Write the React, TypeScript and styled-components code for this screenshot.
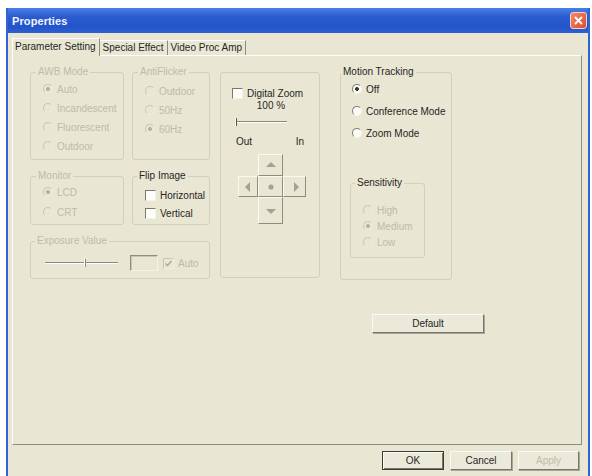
import styled, { createGlobalStyle } from "styled-components";

const FACE = "#e9e7d3";
const INK = "#26261f";
const DIM = "#bdbca8";
const EDGE = "#d2d0bc";
const SHADE = "#8d8c7e";

const GlobalStyle = createGlobalStyle`
  html, body { margin: 0; padding: 0; background: #fff; }
  body { font-family: "Liberation Sans", Arial, sans-serif; font-size: 10px; color: ${INK}; }
`;

const Window = styled.div`
  margin: 8px 0 0 6px;
  width: 584px;
  height: 468px;
  box-sizing: border-box;
  padding: 0 2px;
  background: #3262d4;
  display: flex;
  flex-direction: column;
`;

const TitleBar = styled.div`
  height: 25px;
  flex: none;
  display: flex;
  align-items: center;
  justify-content: space-between;
  padding: 0 1px 0 4px;
  background: linear-gradient(#4a7fe8, #2a5ccf 35%, #2354c9 75%, #2d60d3);
`;

const Title = styled.span`
  font: bold 11px "Liberation Sans", Arial, sans-serif;
  color: #f2f5ff;
  letter-spacing: 0.1px;
`;

const CloseButton = styled.div`
  width: 17px;
  height: 17px;
  box-sizing: border-box;
  border: 1px solid #f3d2c4;
  border-radius: 3px;
  background: linear-gradient(135deg, #f08a6a, #d9502e);
  display: flex;
  align-items: center;
  justify-content: center;
`;

const Client = styled.div`
  flex: 1;
  background: ${FACE};
  display: flex;
  flex-direction: column;
  padding: 5px 3px 0 4px;
`;

const TabStrip = styled.div`
  height: 17px;
  display: flex;
  align-items: flex-end;
  position: relative;
  z-index: 1;
`;

const Tab = styled.div<{ $active?: boolean }>`
  height: ${(p) => (p.$active ? 18 : 15)}px;
  margin-bottom: ${(p) => (p.$active ? -1 : 0)}px;
  box-sizing: border-box;
  padding: ${(p) => (p.$active ? "2px 3px 0 2px" : "1px 3px 0 3px")};
  border-top: 1px solid #fff;
  border-left: ${(p) => (p.$active ? "1px solid #fff" : "none")};
  border-right: 1px solid ${SHADE};
  background: ${FACE};
  font-size: 10px;
  white-space: nowrap;
  color: ${INK};
`;

const Panel = styled.div`
  height: 390px;
  margin-right: 3px;
  box-sizing: border-box;
  border: 1px solid;
  border-color: #fff ${SHADE} ${SHADE} #fff;
  padding: 16px 0 0 17px;
  display: flex;
  flex-direction: column;
`;

const TopArea = styled.div`
  display: flex;
  align-items: flex-start;
`;

const LeftGrid = styled.div`
  display: grid;
  grid-template-columns: 94px 78px;
  grid-template-rows: 88px 49px 38px;
  column-gap: 8px;
  row-gap: 16px;
`;

/* group box: the caption sits on the top border line */
const Group = styled.div<{ $wide?: boolean }>`
  box-sizing: border-box;
  border: 1px solid ${EDGE};
  border-radius: 3px;
  display: flex;
  flex-direction: column;
  align-items: flex-start;
  ${(p) => (p.$wide ? "grid-column: 1 / -1;" : "")}
`;

const Caption = styled.span<{ $dim?: boolean; $left?: number }>`
  margin: -7px 0 0 ${(p) => p.$left ?? 4}px;
  padding: 0 2px;
  background: ${FACE};
  font-size: 10px;
  line-height: 12px;
  color: ${(p) => (p.$dim ? DIM : INK)};
`;

const Stack = styled.div<{ $gap?: number; $top?: number; $left?: number }>`
  margin: ${(p) => p.$top ?? 4}px 0 0 ${(p) => p.$left ?? 12}px;
  display: flex;
  flex-direction: column;
  gap: ${(p) => p.$gap ?? 5}px;
`;

const Option = styled.label<{ $dim?: boolean }>`
  height: 14px;
  display: flex;
  align-items: center;
  gap: 4px;
  font-size: 10px;
  white-space: nowrap;
  color: ${(p) => (p.$dim ? DIM : INK)};
`;

const RadioMark = styled.span<{ $on?: boolean; $dim?: boolean }>`
  width: 10px;
  height: 10px;
  flex: none;
  box-sizing: border-box;
  border-radius: 50%;
  border: 1px solid;
  border-color: ${(p) => (p.$dim ? "#c9c7b3 #eeecdc #eeecdc #c9c7b3" : "#7f7e70 #f4f3ea #f4f3ea #7f7e70")};
  background: ${(p) => {
    const base = p.$dim ? FACE : "#fbfbf6";
    const dot = p.$dim ? "#b4b3a0" : "#3a3a33";
    return p.$on ? `radial-gradient(circle, ${dot} 0 1.6px, ${base} 2.2px)` : base;
  }};
`;

const CheckMark = styled.span<{ $dim?: boolean }>`
  width: 11px;
  height: 11px;
  flex: none;
  box-sizing: border-box;
  border: 1px solid;
  border-color: ${(p) => (p.$dim ? "#c9c7b3 #f1efe2 #f1efe2 #c9c7b3" : "#7a796c #f4f3ea #f4f3ea #7a796c")};
  background: ${(p) => (p.$dim ? FACE : "#fdfdf9")};
  display: flex;
  align-items: center;
  justify-content: center;
`;

const ZoomBox = styled.div`
  margin-left: 10px;
  width: 100px;
  height: 206px;
  box-sizing: border-box;
  border: 1px solid ${EDGE};
  border-radius: 3px;
  padding: 13px 0 0 11px;
  display: flex;
  flex-direction: column;
`;

const Percent = styled.div`
  width: 78px;
  text-align: center;
  line-height: 12px;
  font-size: 10px;
`;

const Track = styled.div<{ $w: number }>`
  position: relative;
  width: ${(p) => p.$w}px;
  height: 12px;
  flex: none;
  &::before {
    content: "";
    position: absolute;
    left: 0;
    right: 0;
    top: 5px;
    height: 1px;
    background: #8a897b;
    box-shadow: 0 1px 0 #fff;
  }
`;

const Thumb = styled.span<{ $dim?: boolean }>`
  position: absolute;
  top: 2px;
  width: 2px;
  height: 8px;
  border-left: 1px solid #fff;
  border-right: 1px solid ${(p) => (p.$dim ? "#8a897b" : "#55554b")};
  box-sizing: border-box;
`;

const EndLabels = styled.div`
  margin: 8px 0 0 4px;
  width: 68px;
  display: flex;
  justify-content: space-between;
  line-height: 12px;
  font-size: 10px;
`;

const DPad = styled.div`
  margin: 6px 0 0 6px;
  display: grid;
  grid-template-columns: 20px 25px 23px;
  grid-template-rows: 22px 21px 27px;
`;

const PadButton = styled.div<{ $col: number; $row: number }>`
  grid-column: ${(p) => p.$col};
  grid-row: ${(p) => p.$row};
  box-sizing: border-box;
  border: 1px solid;
  border-color: #fbfaf2 ${SHADE} ${SHADE} #fbfaf2;
  display: flex;
  align-items: center;
  justify-content: center;
`;

const Motion = styled(Group)`
  margin-left: 20px;
  width: 112px;
  height: 208px;
`;

const Sensitivity = styled(Group)`
  margin: 43px 0 0 9px;
  width: 75px;
  height: 75px;
`;

const ExposureRow = styled.div`
  margin: 8px 0 0 14px;
  height: 16px;
  display: flex;
  align-items: center;
`;

const TextBox = styled.div`
  width: 28px;
  height: 16px;
  margin: 0 5px 0 12px;
  box-sizing: border-box;
  border: 1px solid;
  border-color: #8f8e80 #f4f3ea #f4f3ea #8f8e80;
  box-shadow: inset 1px 1px 0 #c7c6b4;
`;

const Button = styled.div<{ $w: number; $default?: boolean; $dim?: boolean }>`
  width: ${(p) => p.$w}px;
  height: 19px;
  flex: none;
  box-sizing: border-box;
  border: 1px solid;
  border-color: ${(p) => (p.$default ? "#3a3a33" : "#fbfaf2 #77766a #77766a #fbfaf2")};
  box-shadow: ${(p) => (p.$default ? "inset 1px 1px 0 #fbfaf2, inset -1px -1px 0 #77766a" : "1px 1px 0 #a8a796")};
  background: #ebe9d9;
  display: flex;
  align-items: center;
  justify-content: center;
  font-size: 10px;
  color: ${(p) => (p.$dim ? DIM : INK)};
`;

const DefaultButton = styled(Button)`
  margin: 34px 0 0 342px;
`;

const Footer = styled.div`
  display: flex;
  justify-content: flex-end;
  gap: 6px;
  padding: 6px 6px 0 0;
`;

function Radio({ label, on, dim }: { label: string; on?: boolean; dim?: boolean }) {
  return (
    <Option $dim={dim}>
      <RadioMark $on={on} $dim={dim} />
      {label}
    </Option>
  );
}

function Check({ label, on, dim }: { label?: string; on?: boolean; dim?: boolean }) {
  return (
    <Option $dim={dim}>
      <CheckMark $dim={dim}>
        {on && (
          <svg width="7" height="7" viewBox="0 0 7 7">
            <path d="M0.5 3.5 L2.5 5.5 L6.5 1" stroke={dim ? "#a9a894" : INK} strokeWidth="1.4" fill="none" />
          </svg>
        )}
      </CheckMark>
      {label}
    </Option>
  );
}

function Arrow({ dir }: { dir: "up" | "down" | "left" | "right" }) {
  const shapes = {
    up: "M1 7 L6 2 L11 7 Z",
    down: "M1 3 L6 8 L11 3 Z",
    left: "M7 1 L2 6 L7 11 Z",
    right: "M4 1 L9 6 L4 11 Z",
  };
  const size = dir === "up" || dir === "down" ? [12, 10] : [10, 12];
  return (
    <svg width={size[0]} height={size[1]} viewBox={`0 0 ${size[0]} ${size[1]}`}>
      <path d={shapes[dir]} fill="#a3a294" />
    </svg>
  );
}

export default function App() {
  return (
    <>
      <GlobalStyle />
      <Window>
        <TitleBar>
          <Title>Properties</Title>
          <CloseButton>
            <svg width="9" height="9" viewBox="0 0 9 9">
              <path d="M1 1 L8 8 M8 1 L1 8" stroke="#fff" strokeWidth="1.8" />
            </svg>
          </CloseButton>
        </TitleBar>
        <Client>
          <TabStrip>
            <Tab $active>Parameter Setting</Tab>
            <Tab>Special Effect</Tab>
            <Tab>Video Proc Amp</Tab>
          </TabStrip>
          <Panel>
            <TopArea>
              <LeftGrid>
                <Group>
                  <Caption $dim $left={5}>AWB Mode</Caption>
                  <Stack>
                    <Radio label="Auto" on dim />
                    <Radio label="Incandescent" dim />
                    <Radio label="Fluorescent" dim />
                    <Radio label="Outdoor" dim />
                  </Stack>
                </Group>
                <Group>
                  <Caption $dim $left={5}>AntiFlicker</Caption>
                  <Stack $top={6}>
                    <Radio label="Outdoor" dim />
                    <Radio label="50Hz" dim />
                    <Radio label="60Hz" on dim />
                  </Stack>
                </Group>
                <Group>
                  <Caption $dim $left={5}>Monitor</Caption>
                  <Stack $top={3} $gap={6}>
                    <Radio label="LCD" on dim />
                    <Radio label="CRT" dim />
                  </Stack>
                </Group>
                <Group>
                  <Caption>Flip Image</Caption>
                  <Stack $top={6} $gap={4}>
                    <Check label="Horizontal" />
                    <Check label="Vertical" />
                  </Stack>
                </Group>
                <Group $wide>
                  <Caption $dim>Exposure Value</Caption>
                  <ExposureRow>
                    <Track $w={73}>
                      <Thumb $dim style={{ left: 39 }} />
                    </Track>
                    <TextBox />
                    <Check label="Auto" on dim />
                  </ExposureRow>
                </Group>
              </LeftGrid>

              <ZoomBox>
                <Check label="Digital Zoom" />
                <Percent>100 %</Percent>
                <Track $w={52} style={{ marginTop: 4, marginLeft: 3 }}>
                  <Thumb style={{ left: 0 }} />
                </Track>
                <EndLabels>
                  <span>Out</span>
                  <span>In</span>
                </EndLabels>
                <DPad>
                  <PadButton $col={2} $row={1}>
                    <Arrow dir="up" />
                  </PadButton>
                  <PadButton $col={1} $row={2}>
                    <Arrow dir="left" />
                  </PadButton>
                  <PadButton $col={2} $row={2}>
                    <svg width="6" height="6" viewBox="0 0 6 6">
                      <circle cx="3" cy="3" r="2.6" fill="#a3a294" />
                    </svg>
                  </PadButton>
                  <PadButton $col={3} $row={2}>
                    <Arrow dir="right" />
                  </PadButton>
                  <PadButton $col={2} $row={3}>
                    <Arrow dir="down" />
                  </PadButton>
                </DPad>
              </ZoomBox>

              <Motion>
                <Caption $left={0}>Motion Tracking</Caption>
                <Stack $gap={8} $left={11}>
                  <Radio label="Off" on />
                  <Radio label="Conference Mode" />
                  <Radio label="Zoom Mode" />
                </Stack>
                <Sensitivity>
                  <Caption>Sensitivity</Caption>
                  <Stack $top={14} $gap={2}>
                    <Radio label="High" dim />
                    <Radio label="Medium" on dim />
                    <Radio label="Low" dim />
                  </Stack>
                </Sensitivity>
              </Motion>
            </TopArea>
            <DefaultButton $w={112}>Default</DefaultButton>
          </Panel>
          <Footer>
            <Button $w={62} $default>
              OK
            </Button>
            <Button $w={62}>Cancel</Button>
            <Button $w={61} $dim>
              Apply
            </Button>
          </Footer>
        </Client>
      </Window>
    </>
  );
}
